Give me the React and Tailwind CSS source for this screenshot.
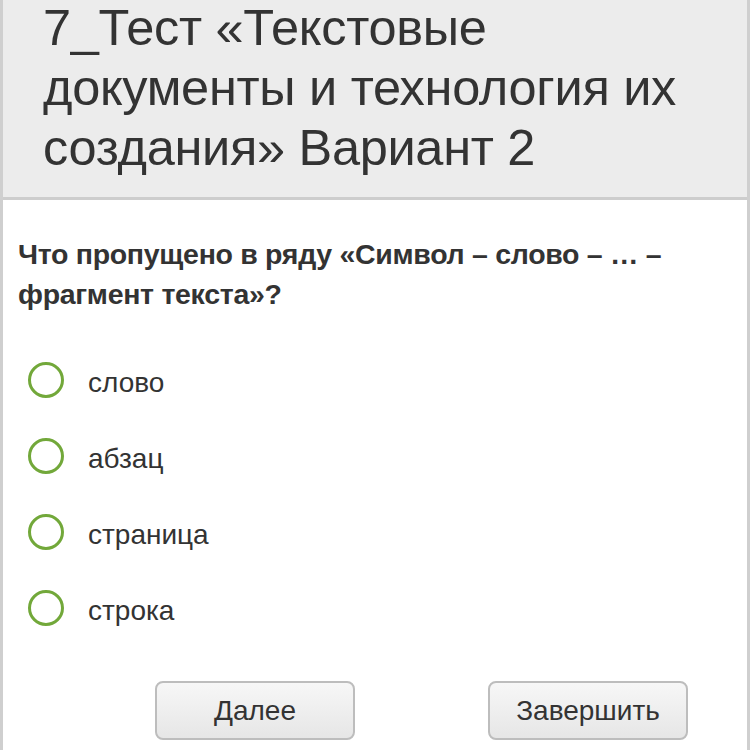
export default function App() {
  const opts = ["слово", "абзац", "страница", "строка"];
  return (
    <div className="w-[750px] h-[750px] overflow-hidden bg-white border-x-[3px] border-[#cfcfcf]" style={{ fontFamily: '"Liberation Sans", Arial, sans-serif' }}>
      <div className="h-[202px] bg-[#ececec] border-b-[3px] border-[#cdcdcd] pl-[40px]">
        <div className="text-[50.5px] leading-[60px] text-[#333] mt-[-2px] tracking-[-0.3px]">
          7_Тест «Текстовые<br />документы и технология их<br />создания» Вариант 2
        </div>
      </div>
      <div className="pl-[15px] pt-[34px] text-[28.5px] leading-[40px] font-bold text-[#333] tracking-[-0.3px]">
        Что пропущено в ряду «Символ – слово – … –<br />фрагмент текста»?
      </div>
      <div className="flex flex-col gap-[38px] pt-[47px] pl-[25px]">
        {opts.map((o) => (
          <div key={o} className="flex items-center h-[38px]">
            <div className="w-[36px] h-[36px] rounded-full border-[3px] border-[#72a83a] box-border" />
            <span className="ml-[24px] pt-[6px] text-[28px] text-[#333]">{o}</span>
          </div>
        ))}
      </div>
      <div className="flex pt-[54px] pl-[152px] gap-[133px]">
        {["Далее", "Завершить"].map((b) => (
          <div key={b} className="w-[200px] h-[59px] rounded-[8px] border-2 border-[#bdbdbd] bg-gradient-to-b from-[#f7f7f7] to-[#e6e6e6] flex items-center justify-center text-[28px] text-[#333]">
            {b}
          </div>
        ))}
      </div>
    </div>
  );
}
